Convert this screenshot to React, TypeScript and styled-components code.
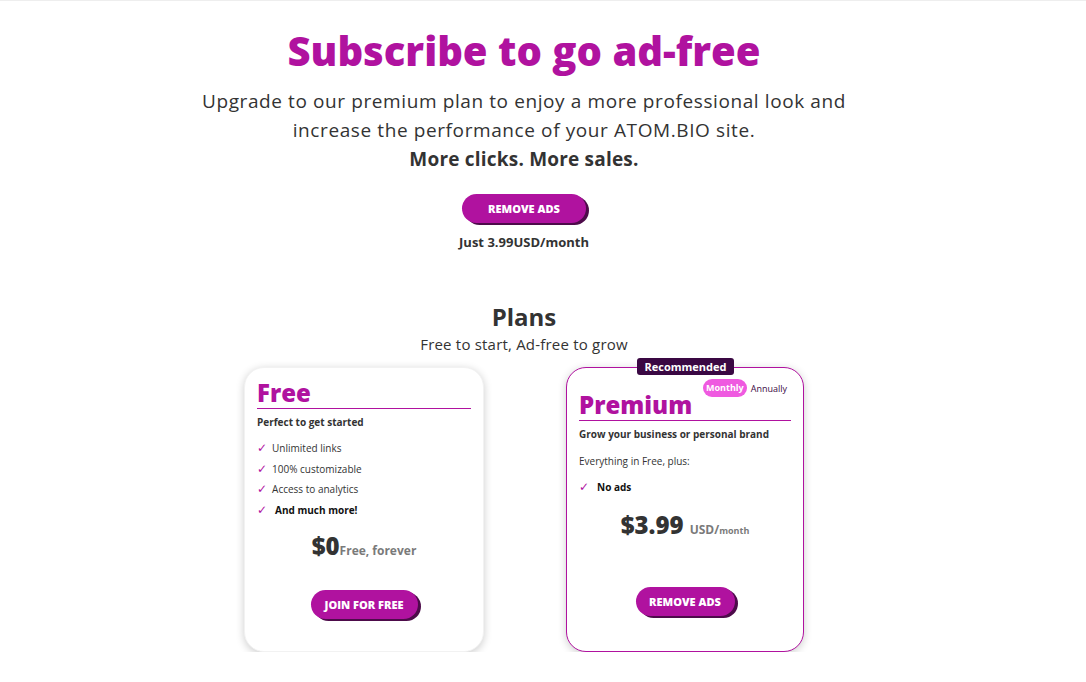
import { FC } from 'react'
import styled, { createGlobalStyle } from 'styled-components'

const purple = '#b0129f'
const dark = '#333333'

const GlobalStyle = createGlobalStyle({
  'html, body': {
    margin: 0,
    padding: 0,
    background: '#ffffff',
    fontFamily: '"Open Sans", "Noto Sans", sans-serif',
    color: dark,
  },
})

const Page = styled('div')({
  borderTop: '1px solid #eeeeee',
  paddingRight: 38,
  display: 'flex',
  flexDirection: 'column',
  alignItems: 'center',
})

const Title = styled('h1')({
  margin: '24px 0 0',
  fontSize: 40,
  lineHeight: '52px',
  fontWeight: 800,
  color: purple,
})

const Lead = styled('p')({
  margin: '10px 0 0',
  fontSize: 19,
  lineHeight: '29px',
  letterSpacing: 0.6,
  textAlign: 'center',
  maxWidth: 700,
})

const Strong = styled('strong')({
  display: 'block',
  fontWeight: 700,
  letterSpacing: 0.2,
})

const Button = styled('button')<{ $w: number }>(({ $w }) => ({
  width: $w,
  height: 29,
  border: 'none',
  borderRadius: 15,
  background: purple,
  color: '#fff',
  fontFamily: 'inherit',
  fontWeight: 800,
  fontSize: 11,
  boxShadow: '3px 2px 0 #4d0b4a',
  cursor: 'pointer',
}))

const Note = styled('div')({
  marginTop: 10,
  fontSize: 13,
  fontWeight: 700,
})

const PlansTitle = styled('h2')({
  margin: '50px 0 0',
  fontSize: 24,
  lineHeight: '32px',
  fontWeight: 700,
})

const PlansSub = styled('div')({
  fontSize: 15,
  lineHeight: '22px',
  letterSpacing: 0.2,
})

const Cards = styled('div')({
  marginTop: 12,
  display: 'flex',
  gap: 82,
  alignItems: 'flex-start',
})

const Card = styled('div')<{ $highlight?: boolean }>(({ $highlight }) => ({
  position: 'relative',
  boxSizing: 'border-box',
  width: $highlight ? 238 : 240,
  height: 285,
  borderRadius: 20,
  border: $highlight ? `1px solid ${purple}` : '1px solid #f2f2f2',
  boxShadow: '0 2px 8px rgba(0,0,0,0.2)',
  padding: '10px 12px 0',
  display: 'flex',
  flexDirection: 'column',
  background: '#fff',
}))

const Badge = styled('div')({
  position: 'absolute',
  top: -10,
  left: 70,
  width: 97,
  height: 17,
  background: '#3a0843',
  color: '#fff',
  fontSize: 11,
  fontWeight: 700,
  lineHeight: '17px',
  textAlign: 'center',
  borderRadius: 3,
})

const Toggle = styled('div')({
  position: 'absolute',
  top: 11,
  right: 16,
  display: 'flex',
  alignItems: 'center',
  gap: 4,
  fontSize: 9,
})

const TogglePill = styled('span')({
  background: '#ef5ae0',
  color: '#fff',
  fontWeight: 700,
  borderRadius: 9,
  padding: '0 3px',
  height: 18,
  lineHeight: '18px',
})

const ToggleText = styled('span')({
  color: '#3a0843',
})

const PlanName = styled('div')<{ $top?: number }>(({ $top = 0 }) => ({
  marginTop: $top,
  fontSize: 24,
  fontWeight: 800,
  lineHeight: '30px',
  color: purple,
  borderBottom: `1px solid ${purple}`,
}))

const Tagline = styled('div')({
  marginTop: 6,
  fontSize: 10,
  fontWeight: 700,
  lineHeight: '14px',
})

const Text = styled('div')({
  marginTop: 13,
  fontSize: 10,
  lineHeight: '14px',
})

const List = styled('ul')({
  listStyle: 'none',
  margin: '12px 0 0',
  padding: 0,
  display: 'flex',
  flexDirection: 'column',
  gap: 6.5,
})

const Item = styled('li')<{ $bold?: boolean }>(({ $bold }) => ({
  display: 'flex',
  alignItems: 'center',
  gap: $bold ? 8 : 5,
  fontSize: 10,
  lineHeight: '14px',
  fontWeight: $bold ? 700 : 400,
  color: $bold ? '#111' : dark,
}))

const Check = styled('span')({
  color: purple,
  fontFamily: '"DejaVu Sans", sans-serif',
  fontSize: 12,
  lineHeight: '14px',
})

const Price = styled('div')<{ $top: number; $gap: number }>(({ $top, $gap }) => ({
  marginTop: $top,
  display: 'flex',
  alignItems: 'baseline',
  justifyContent: 'center',
  gap: $gap,
}))

const Amount = styled('span')({
  fontSize: 24,
  fontWeight: 800,
  color: dark,
})

const Unit = styled('span')<{ $size: number }>(({ $size }) => ({
  fontSize: $size,
  fontWeight: 700,
  color: '#7a7a7a',
}))

const Actions = styled('div')<{ $top: number }>(({ $top }) => ({
  marginTop: $top,
  display: 'flex',
  justifyContent: 'center',
}))

const TopAction = styled('div')({
  marginTop: 20,
})

const freeFeatures = ['Unlimited links', '100% customizable', 'Access to analytics']

const App: FC = () => (
  <>
    <GlobalStyle />
    <Page>
      <Title>Subscribe to go ad-free</Title>
      <Lead>
        Upgrade to our premium plan to enjoy a more professional look and increase the
        performance of your ATOM.BIO site.
        <Strong>More clicks. More sales.</Strong>
      </Lead>
      <TopAction>
        <Button $w={124}>REMOVE ADS</Button>
      </TopAction>
      <Note>Just 3.99USD/month</Note>

      <PlansTitle>Plans</PlansTitle>
      <PlansSub>Free to start, Ad-free to grow</PlansSub>

      <Cards>
        <Card>
          <PlanName>Free</PlanName>
          <Tagline>Perfect to get started</Tagline>
          <List>
            {freeFeatures.map((f) => (
              <Item key={f}>
                <Check>✓</Check>
                {f}
              </Item>
            ))}
            <Item $bold>
              <Check>✓</Check>
              And much more!
            </Item>
          </List>
          <Price $top={12} $gap={0}>
            <Amount>$0</Amount>
            <Unit $size={12}>Free, forever</Unit>
          </Price>
          <Actions $top={28}>
            <Button $w={107}>JOIN FOR FREE</Button>
          </Actions>
        </Card>

        <Card $highlight>
          <Badge>Recommended</Badge>
          <Toggle>
            <TogglePill>Monthly</TogglePill>
            <ToggleText>Annually</ToggleText>
          </Toggle>
          <PlanName $top={12}>Premium</PlanName>
          <Tagline>Grow your business or personal brand</Tagline>
          <Text>Everything in Free, plus:</Text>
          <List>
            <Item $bold>
              <Check>✓</Check>
              No ads
            </Item>
          </List>
          <Price $top={14} $gap={6}>
            <Amount>$3.99</Amount>
            <span>
              <Unit $size={12}>USD/</Unit>
              <Unit $size={9}>month</Unit>
            </span>
          </Price>
          <Actions $top={46}>
            <Button $w={99}>REMOVE ADS</Button>
          </Actions>
        </Card>
      </Cards>
    </Page>
  </>
)

export default App
